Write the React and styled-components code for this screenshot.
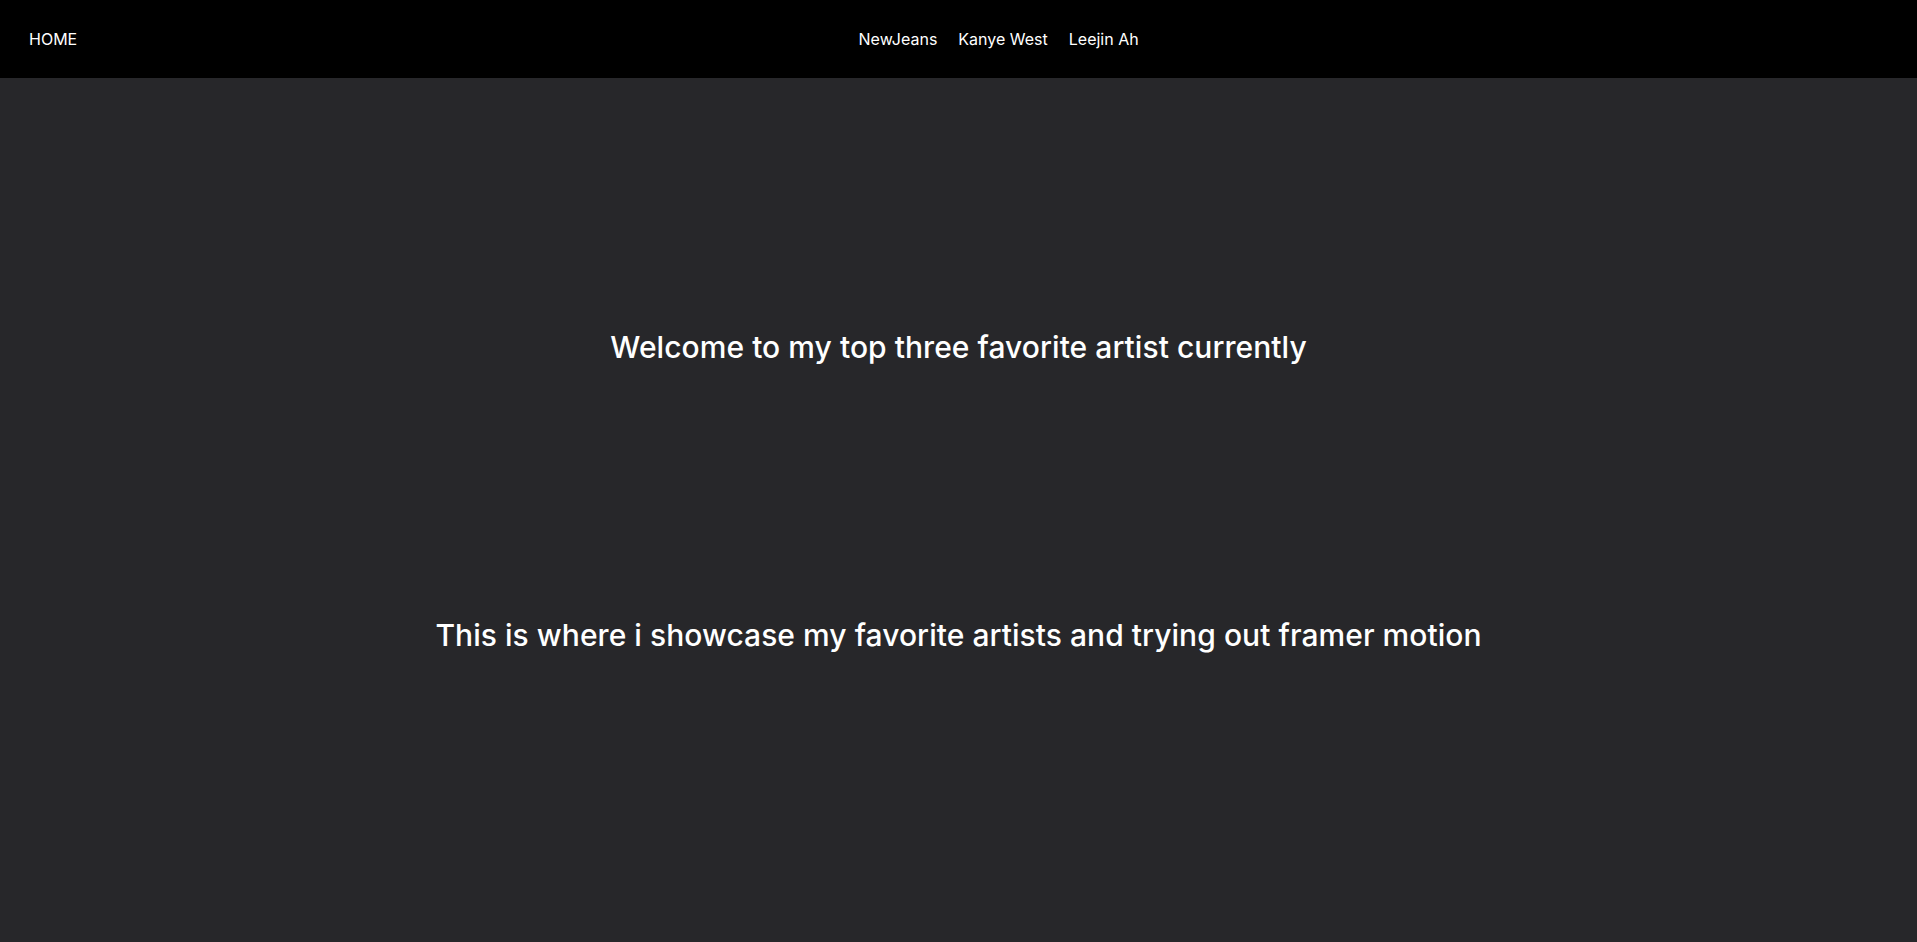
import React from "react";
import styled, { createGlobalStyle } from "styled-components";

const GlobalStyle = createGlobalStyle`
  html, body {
    margin: 0;
    padding: 0;
    background: #27272a;
    font-family: Inter, "Noto Sans", sans-serif;
    color: #ffffff;
  }
  * {
    box-sizing: border-box;
  }
`;

const Page = styled.div`
  min-height: 100vh;
  display: flex;
  flex-direction: column;
  background: #27272a;
`;

const Header = styled.header`
  height: 78px;
  background: #000000;
  display: flex;
  align-items: center;
  padding-left: 29px;
`;

const HomeLink = styled.a`
  color: #ffffff;
  font-size: 16px;
  line-height: 24px;
  text-decoration: none;
  cursor: pointer;
`;

const Nav = styled.nav`
  margin: 0 auto;
  display: flex;
  gap: 21px;
  padding-left: 3px;
`;

const NavLink = styled.a`
  color: #ffffff;
  font-size: 16px;
  line-height: 24px;
  text-decoration: none;
  cursor: pointer;
`;

const Main = styled.main`
  flex: 1;
  display: flex;
  flex-direction: column;
  align-items: center;
  padding-top: 251px;
  gap: 252px;
`;

const Heading = styled.h1`
  margin: 0;
  font-size: 30px;
  line-height: 36px;
  font-weight: 500;
  text-align: center;
  letter-spacing: 0.05px;
`;

const links = ["NewJeans", "Kanye West", "Leejin Ah"];

export default function App() {
  return (
    <>
      <GlobalStyle />
      <Page>
        <Header>
          <HomeLink>HOME</HomeLink>
          <Nav>
            {links.map((name) => (
              <NavLink key={name}>{name}</NavLink>
            ))}
          </Nav>
        </Header>
        <Main>
          <Heading>Welcome to my top three favorite artist currently</Heading>
          <Heading>
            This is where i showcase my favorite artists and trying out framer
            motion
          </Heading>
        </Main>
      </Page>
    </>
  );
}
